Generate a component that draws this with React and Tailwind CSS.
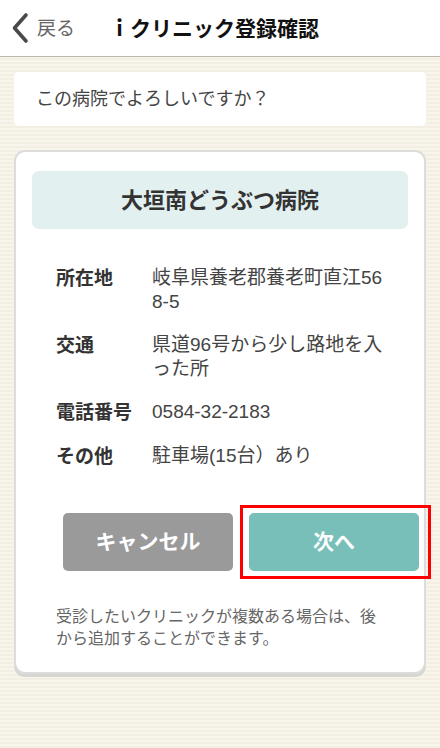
const info = [
  { label: '所在地', value: '岐阜県養老郡養老町直江568-5' },
  { label: '交通', value: '県道96号から少し路地を入った所' },
  { label: '電話番号', value: '0584-32-2183' },
  { label: 'その他', value: '駐車場(15台）あり' },
]

function Header() {
  return (
    <div className="flex h-[57px] items-center border-b border-[#b9b7ae] bg-white">
      <div className="flex items-center pl-[11px]">
        <svg width="19" height="32" viewBox="0 0 19 32" className="shrink-0">
          <path d="M15 3 L3.5 16 L15 29" fill="none" stroke="#4a4a4a" strokeWidth="3.6" strokeLinecap="round" strokeLinejoin="round" />
        </svg>
        <span className="ml-[7px] text-[19px] leading-none text-[#666]">戻る</span>
      </div>
      <h1 className="ml-[34px] text-[21px] font-bold leading-none text-[#111]">ｉクリニック登録確認</h1>
    </div>
  )
}

function InfoRow({ label, value }) {
  return (
    <div className="flex text-[19px] leading-[24px]">
      <div className="w-[96px] shrink-0 pt-[1px] font-bold text-[#333]">{label}</div>
      <div className="w-[236px] break-all text-[#444]">{value}</div>
    </div>
  )
}

export default function App() {
  return (
    <div
      lang="ja"
      className="min-h-[748px] w-[440px] bg-[repeating-linear-gradient(0deg,#f2efe2_0px,#f2efe2_2px,#f7f5ec_2px,#f7f5ec_4px)] font-['Liberation_Sans','Noto_Sans_CJK_JP',sans-serif]"
    >
      <Header />

      <div className="px-[14px] pt-[15px] pb-[24px]">
        <div className="flex h-[54px] items-center rounded-[5px] bg-white pl-[22px] text-[18px] text-[#444]">
          この病院でよろしいですか？
        </div>

        <div className="mt-[24px] rounded-[11px] border-2 border-[#dcdcda] bg-white shadow-[0_3px_0_#d6d6d2] pb-[22px]">
          <div className="px-[16px] pt-[19px]">
            <div className="flex h-[58px] items-center justify-center rounded-[7px] bg-[#e2f0f0] text-[22px] font-bold text-[#333]">
              大垣南どうぶつ病院
            </div>
          </div>

          <div className="flex flex-col gap-[19px] pl-[40px] pt-[37px]">
            {info.map((row) => (
              <InfoRow key={row.label} label={row.label} value={row.value} />
            ))}
          </div>

          <div className="mt-[44px] flex gap-[16px] pl-[47px]">
            <button className="flex h-[58px] w-[170px] items-center justify-center rounded-[5px] bg-[#9a9a9a] text-[21px] font-bold text-white">
              キャンセル
            </button>
            <div className="relative">
              <button className="flex h-[58px] w-[170px] items-center justify-center rounded-[5px] bg-[#79bfb9] text-[21px] font-bold text-white">
                次へ
              </button>
              <span className="pointer-events-none absolute -top-[8px] -left-[9px] -bottom-[8px] -right-[12px] border-[3px] border-[#f00]" />
            </div>
          </div>

          <p className="mt-[35px] pl-[40px] pr-[38px] text-[16px] leading-[22px] text-[#666]">
            受診したいクリニックが複数ある場合は、後から追加することができます。
          </p>
        </div>
      </div>
    </div>
  )
}
